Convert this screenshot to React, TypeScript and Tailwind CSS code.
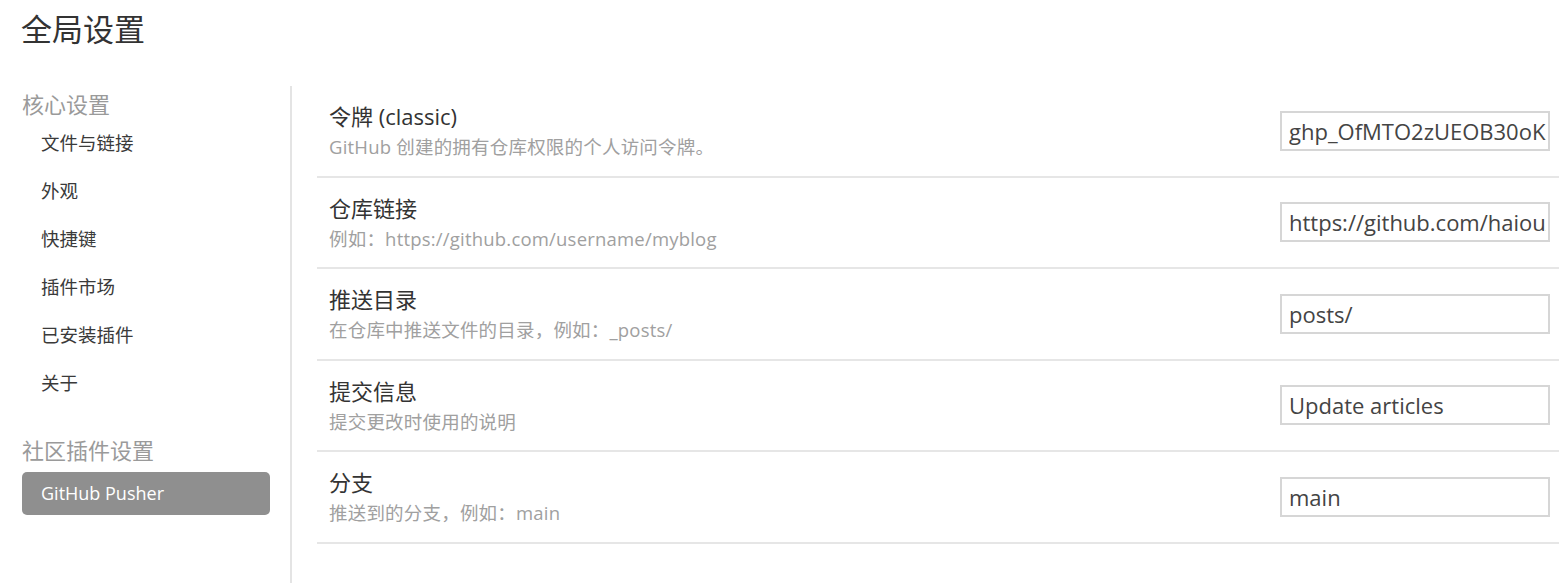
import React from "react";

const coreItems = ["文件与链接", "外观", "快捷键", "插件市场", "已安装插件", "关于"];

const rows = [
  {
    title: "令牌 (classic)",
    desc: "GitHub 创建的拥有仓库权限的个人访问令牌。",
    value: "ghp_OfMTO2zUEOB30oKxR7vQpLm2aZ91",
  },
  {
    title: "仓库链接",
    desc: "例如：https://github.com/username/myblog",
    value: "https://github.com/haiou/blog",
  },
  {
    title: "推送目录",
    desc: "在仓库中推送文件的目录，例如：_posts/",
    value: "posts/",
  },
  {
    title: "提交信息",
    desc: "提交更改时使用的说明",
    value: "Update articles",
  },
  {
    title: "分支",
    desc: "推送到的分支，例如：main",
    value: "main",
  },
];

const font = { fontFamily: '"Open Sans", "Noto Sans CJK SC", sans-serif' };

export default function App() {
  return (
    <div className="w-[1559px] h-[583px] bg-white overflow-hidden text-[#333]" style={font}>
      {/* Header */}
      <h1 className="pl-[21px] pt-[9px] h-[86px] text-[31px] leading-[40px] font-normal text-[#333]">
        全局设置
      </h1>

      <div className="flex h-[497px]">
        {/* Sidebar */}
        <aside className="w-[292px] shrink-0 pl-[22px] pr-[20px] pt-[3px] border-r-2 border-[#e4e4e4]">
          <div className="h-[30px] flex items-center text-[22px] text-[#9a9a9a]">核心设置</div>
          <ul>
            {coreItems.map((item) => (
              <li key={item} className="h-[48px] flex items-center pl-[19px] text-[18.5px] text-[#3a3a3a]">
                {item}
              </li>
            ))}
          </ul>
          <div className="mt-[28px] h-[30px] flex items-center text-[22px] text-[#9a9a9a]">社区插件设置</div>
          <div className="mt-[7px] h-[43px] rounded-[5px] bg-[#8f8f8f] flex items-center pl-[19px] text-[18px] font-medium text-white">
            GitHub Pusher
          </div>
        </aside>

        {/* Content */}
        <main className="flex-1 pl-[25px]">
          {rows.map((row) => (
            <div
              key={row.title}
              className="h-[91.5px] flex items-center justify-between border-b-2 border-[#e6e6e6] pr-[9px]"
            >
              <div className="pl-[12px]">
                <div className="text-[22px] leading-[28px] text-[#333]">{row.title}</div>
                <div className="mt-[5px] text-[18.5px] leading-[24px] tracking-[0.2px] text-[#a0a0a0]">{row.desc}</div>
              </div>
              <input
                readOnly
                value={row.value}
                className="w-[270px] h-[40px] border-2 border-[#d6d6d6] pl-[7px] pr-[2px] text-[22px] text-[#444] outline-none bg-white"
                style={font}
              />
            </div>
          ))}
        </main>
      </div>
    </div>
  );
}
